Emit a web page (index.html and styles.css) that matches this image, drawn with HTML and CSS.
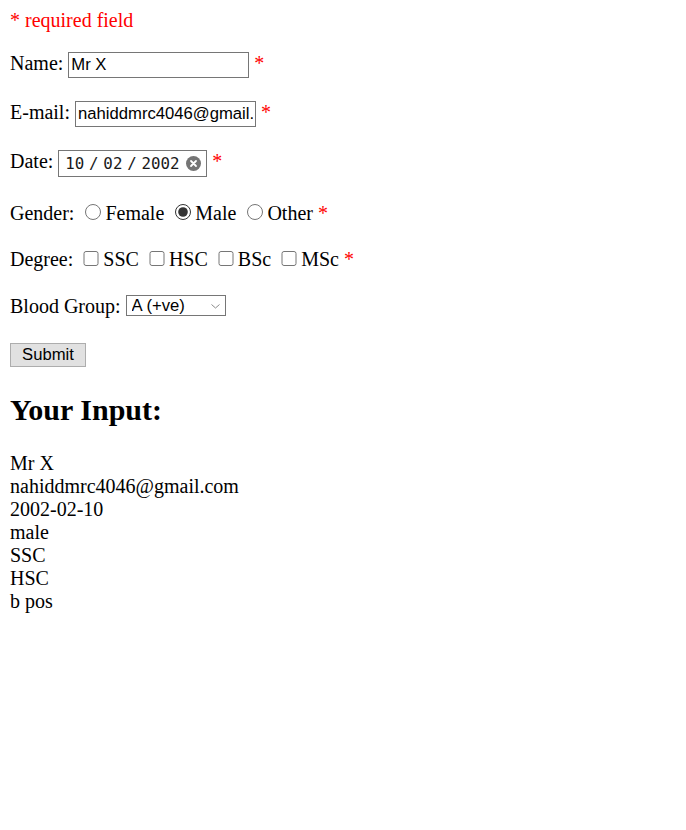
FILE: index.html
```html
<!DOCTYPE html>
<html>
<head>
<meta charset="utf-8">
<link rel="stylesheet" href="styles.css">
</head>
<body>
<p class="note"><span class="error">* required field</span></p>
<form class="form">
Name: <input class="txt" type="text" value="Mr X"> <span class="error">*</span>
<br><br>
E-mail: <input class="txt" type="text" value="nahiddmrc4046@gmail.com"> <span class="error">*</span>
<br><br>
Date: <span class="date"><span class="date-text">10 / 02 / 2002</span><svg class="clear" width="15" height="15" viewBox="0 0 15 15"><circle cx="7.5" cy="7.5" r="7.5" fill="#757575"/><path d="M5 5 L10 10 M10 5 L5 10" stroke="#fff" stroke-width="1.8" stroke-linecap="round"/></svg></span> <span class="error">*</span>
<br><br>
Gender:
<input class="radio" type="radio" name="gender">Female
<input class="radio" type="radio" name="gender" checked>Male
<input class="radio" type="radio" name="gender">Other
<span class="error">*</span>
<br><br>
Degree:
<input class="check" type="checkbox">SSC
<input class="check" type="checkbox">HSC
<input class="check" type="checkbox">BSc
<input class="check" type="checkbox">MSc
<span class="error">*</span>
<br><br>
Blood Group: <span class="sel-wrap"><select class="sel">
<option>A (+ve)</option>
<option>A (-ve)</option>
<option>B (+ve)</option>
<option>B (-ve)</option>
<option>AB (+ve)</option>
<option>AB (-ve)</option>
<option>O (+ve)</option>
<option>O (-ve)</option>
</select><svg class="chev" width="9" height="5" viewBox="0 0 9 5"><path d="M0.5 0.5 L4.5 4 L8.5 0.5" fill="none" stroke="#8a8a8a" stroke-width="1"/></svg></span>
<br><br>
<input class="btn" type="submit" value="Submit">
</form>
<h2 class="title">Your Input:</h2>
Mr X<br>nahiddmrc4046@gmail.com<br>2002-02-10<br>male<br>SSC<br>HSC<br>b pos<br>
</body>
</html>
```
FILE: styles.css
```css
body {
  margin: 9px 10px 10px;
  font-family: "Liberation Serif", "Times New Roman", serif;
  font-size: 20px;
  color: #000;
  background: #fff;
}
.error { color: #ff0000; }
.note { margin: 0 0 20px; }
.form { margin: 0; }
.txt {
  box-sizing: border-box;
  width: 181px;
  height: 26px;
  margin: 0;
  padding: 1px 2px;
  border: 1px solid #767676;
  font-family: "Liberation Sans", Arial, sans-serif;
  font-size: 16.67px;
  color: #000;
  vertical-align: 0;
}
.date {
  display: inline-flex;
  align-items: center;
  box-sizing: border-box;
  width: 149px;
  height: 27px;
  padding: 0 5px 0 6px;
  border: 1px solid #767676;
  vertical-align: middle;
  justify-content: space-between;
}
.date-text {
  font-family: "DejaVu Sans Mono", monospace;
  font-size: 15.8px;
  word-spacing: -4.75px;
  color: #1a1a1a;
}
.clear { display: block; }
.radio {
  width: 16px;
  height: 16px;
  margin: 4px 4px 0 6px;
  accent-color: #333;
}
.check {
  width: 16px;
  height: 15px;
  margin: 2px 4px 4px 5px;
}
.sel-wrap {
  position: relative;
  display: inline-block;
  vertical-align: 2px;
  margin-top: 1px;
}
.sel {
  box-sizing: border-box;
  width: 100px;
  height: 21px;
  margin: 0;
  padding: 0 0 0 5px;
  border: 1px solid #767676;
  border-radius: 0;
  background: #fff;
  appearance: none;
  -webkit-appearance: none;
  font-family: "Liberation Sans", Arial, sans-serif;
  font-size: 16.67px;
  color: #000;
  display: block;
}
.chev {
  position: absolute;
  right: 6px;
  top: 9px;
  pointer-events: none;
}
.btn {
  box-sizing: border-box;
  width: 76px;
  height: 24px;
  margin: 2px 0 0;
  padding: 0;
  border: 1px solid #adadad;
  border-radius: 0;
  background: #e1e1e1;
  font-family: "Liberation Sans", Arial, sans-serif;
  font-size: 16.67px;
  color: #000;
}
.title {
  font-size: 30px;
  margin: 26px 0 25px;
}
```
